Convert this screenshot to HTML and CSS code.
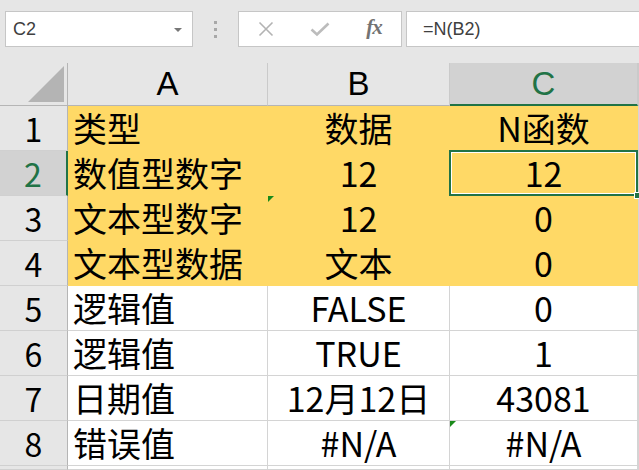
FILE: index.html
```html
<!DOCTYPE html>
<html lang="zh">
<head>
<meta charset="utf-8">
<title>N函数</title>
<link rel="stylesheet" href="styles.css">
</head>
<body>
<div class="toolbar">
  <div class="namebox"><span class="name">C2</span><span class="caret"></span></div>
  <div class="dots"><i></i><i></i><i></i></div>
  <div class="fxbox">
    <span class="btn"><svg width="16" height="16" viewBox="0 0 16 16"><path d="M1.5 1.5 L14.5 14.5 M14.5 1.5 L1.5 14.5" stroke="#b3b3b3" stroke-width="1.6" fill="none"/></svg></span>
    <span class="btn"><svg width="20" height="16" viewBox="0 0 20 16"><path d="M1.5 8.5 L7 13.5 L18.5 2.5" stroke="#bcbcbc" stroke-width="2.6" fill="none"/></svg></span>
    <span class="btn fx">fx</span>
  </div>
  <div class="formula">=N(B2)</div>
</div>
<div class="sheet">
  <div class="corner"><span class="tri"></span></div>
  <div class="colh">A</div>
  <div class="colh">B</div>
  <div class="colh sel">C</div>
  <div class="colh rest"></div>

  <div class="rowh">1</div>
  <div class="cell fill left">类型</div>
  <div class="cell fill">数据</div>
  <div class="cell fill">N函数</div>
  <div class="cell rest"></div>

  <div class="rowh sel">2</div>
  <div class="cell fill left">数值型数字</div>
  <div class="cell fill">12</div>
  <div class="cell fill active">12</div>
  <div class="cell rest"></div>

  <div class="rowh">3</div>
  <div class="cell fill left">文本型数字</div>
  <div class="cell fill flag">12</div>
  <div class="cell fill">0</div>
  <div class="cell rest"></div>

  <div class="rowh">4</div>
  <div class="cell fill left">文本型数据</div>
  <div class="cell fill">文本</div>
  <div class="cell fill">0</div>
  <div class="cell rest"></div>

  <div class="rowh">5</div>
  <div class="cell left">逻辑值</div>
  <div class="cell">FALSE</div>
  <div class="cell">0</div>
  <div class="cell rest"></div>

  <div class="rowh">6</div>
  <div class="cell left">逻辑值</div>
  <div class="cell">TRUE</div>
  <div class="cell">1</div>
  <div class="cell rest"></div>

  <div class="rowh">7</div>
  <div class="cell left">日期值</div>
  <div class="cell">12月12日</div>
  <div class="cell">43081</div>
  <div class="cell rest"></div>

  <div class="rowh">8</div>
  <div class="cell left">错误值</div>
  <div class="cell">#N/A</div>
  <div class="cell flag">#N/A</div>
  <div class="cell rest"></div>

  <div class="rowh"></div>
  <div class="cell"></div>
  <div class="cell"></div>
  <div class="cell"></div>
  <div class="cell rest"></div>
</div>
</body>
</html>
```
FILE: styles.css
```css
html, body {
  margin: 0;
  padding: 0;
  width: 639px;
  height: 470px;
  overflow: hidden;
  background: #e6e6e6;
}
body {
  font-family: "Noto Sans CJK SC", "Noto Sans", sans-serif;
  color: #000;
}
.toolbar {
  display: flex;
  align-items: flex-start;
  height: 63px;
  box-sizing: border-box;
  padding: 11px 0 0 5px;
  font-family: "Liberation Sans", Arial, sans-serif;
}
.namebox {
  width: 188px;
  height: 36px;
  box-sizing: border-box;
  border: 1px solid #c6c6c6;
  background: #fff;
  display: flex;
  align-items: center;
  justify-content: space-between;
  padding: 0 10px 0 7px;
}
.name, .formula {
  font-size: 18px;
  color: #404040;
}
.caret {
  width: 0;
  height: 0;
  border-left: 4px solid transparent;
  border-right: 4px solid transparent;
  border-top: 4px solid #777;
  margin-top: 1px;
}
.dots {
  width: 45px;
  height: 36px;
  display: flex;
  flex-direction: column;
  align-items: center;
  justify-content: center;
  gap: 4px;
}
.dots i {
  display: block;
  width: 3px;
  height: 3px;
  background: #a8a8a8;
}
.fxbox {
  width: 164px;
  height: 36px;
  box-sizing: border-box;
  border: 1px solid #c6c6c6;
  background: #fff;
  display: flex;
}
.btn {
  width: 54px;
  display: flex;
  align-items: center;
  justify-content: center;
}
.fx {
  font-family: "Liberation Serif", "Times New Roman", serif;
  font-style: italic;
  font-weight: bold;
  font-size: 21px;
  letter-spacing: -1px;
  color: #737373;
  padding-bottom: 3px;
  box-sizing: border-box;
}
.formula {
  flex: 1;
  height: 36px;
  box-sizing: border-box;
  margin-left: 4px;
  margin-right: -10px;
  border: 1px solid #c6c6c6;
  background: #fff;
  display: flex;
  align-items: center;
  padding-left: 16px;
}
.sheet {
  display: grid;
  grid-template-columns: 68px 200px 182px 188px 1fr;
  grid-template-rows: 43px repeat(8, 45px) 1fr;
  height: 407px;
  overflow: hidden;
}
.corner {
  position: relative;
  border-right: 1px solid #b5b5b5;
  border-bottom: 1px solid #b5b5b5;
  box-sizing: border-box;
}
.tri {
  position: absolute;
  right: 3px;
  bottom: 3px;
  width: 36px;
  height: 36px;
  background: #b4b4b4;
  clip-path: polygon(100% 0, 100% 100%, 0 100%);
}
.colh {
  display: flex;
  align-items: center;
  justify-content: center;
  font-family: "Liberation Sans", Arial, sans-serif;
  font-size: 33px;
  line-height: 1;
  padding-bottom: 1px;
  box-sizing: border-box;
  border-right: 1px solid #cacaca;
  border-bottom: 1px solid #b5b5b5;
}
.colh.sel {
  background: #d2d2d2;
  color: #217346;
  border-bottom: 2px solid #217346;
}
.rowh {
  display: flex;
  align-items: center;
  justify-content: center;
  font-size: 32px;
  line-height: 1;
  box-sizing: border-box;
  border-right: 1px solid #b5b5b5;
  border-bottom: 1px solid #d0d0d0;
}
.rowh.sel {
  background: #d2d2d2;
  color: #217346;
  border-right: 2px solid #217346;
}
.cell {
  position: relative;
  background: #fff;
  display: flex;
  align-items: center;
  justify-content: center;
  font-size: 34px;
  line-height: 1;
  white-space: nowrap;
  box-sizing: border-box;
  border-right: 1px solid #d4d4d4;
  border-bottom: 1px solid #d4d4d4;
}
.cell.left {
  justify-content: flex-start;
  padding-left: 5px;
}
.cell.fill {
  background: #ffd966;
  border-color: #ffd966;
}
.cell.active::after {
  content: "";
  position: absolute;
  left: -1px;
  top: -1px;
  right: -1px;
  bottom: -1px;
  border: 2px solid #217346;
  box-shadow: inset 0 0 0 1px #fff;
}
.cell.active::before {
  content: "";
  position: absolute;
  right: -4px;
  bottom: -4px;
  width: 5px;
  height: 5px;
  background: #217346;
  border: 1px solid #fff;
  z-index: 2;
}
.cell.flag::before {
  content: "";
  position: absolute;
  left: 0;
  top: 0;
  width: 6px;
  height: 6px;
  background: #1a8a1a;
  clip-path: polygon(0 0, 100% 0, 0 100%);
}
```
